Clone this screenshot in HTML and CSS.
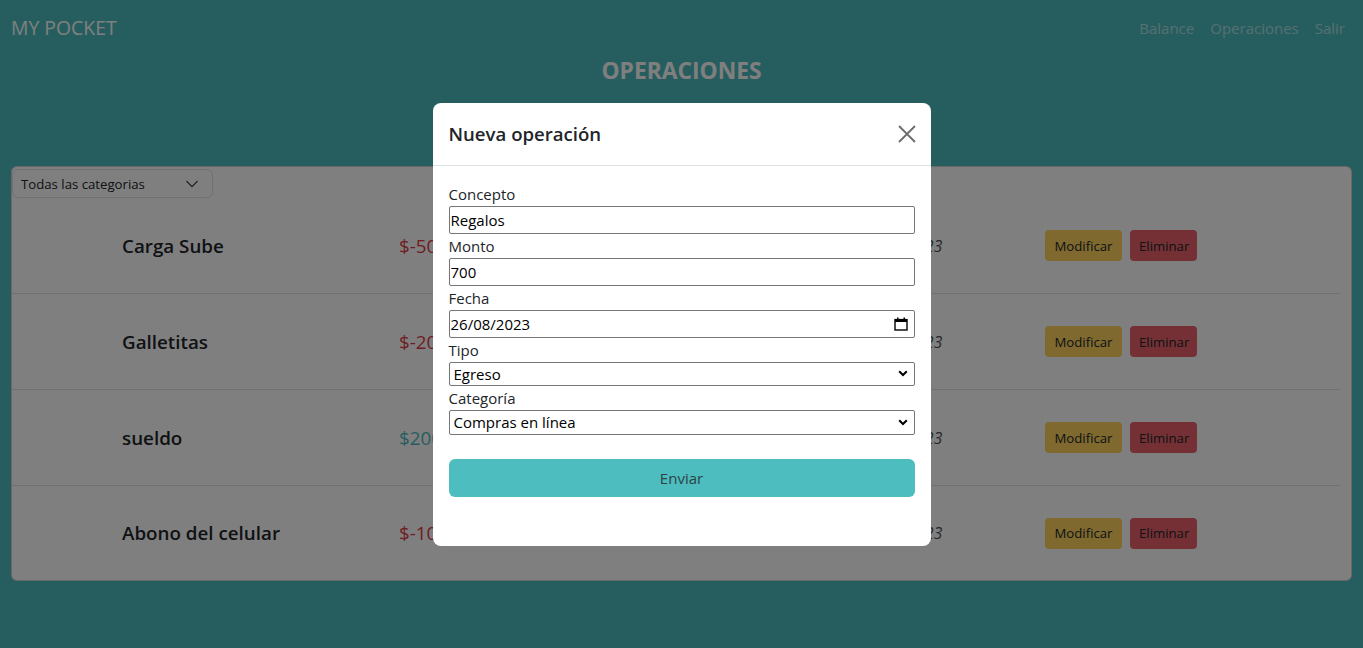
FILE: index.html
```html
<!DOCTYPE html>
<html lang="es">
<head>
<meta charset="utf-8">
<title>My Pocket - Operaciones</title>
<link rel="stylesheet" href="styles.css">
</head>
<body>
<nav class="navbar">
  <a class="brand" href="#">MY POCKET</a>
  <ul class="nav-links">
    <li><a href="#">Balance</a></li>
    <li><a href="#">Operaciones</a></li>
    <li><a href="#">Salir</a></li>
  </ul>
</nav>

<main>
  <h2 class="page-title">OPERACIONES</h2>
  <section class="card">
    <div class="filter">
      <select class="filter-select">
        <option>Todas las categorias</option>
      </select>
      <svg class="filter-chevron" width="14" height="14" viewBox="0 0 16 16"><path d="m2 5 6 6 6-6" fill="none" stroke="#343a40" stroke-width="1.5" stroke-linecap="round" stroke-linejoin="round"/></svg>
    </div>
    <ul class="op-list">
      <li class="op-row">
        <span class="op-desc">Carga Sube</span>
        <span class="op-amount neg">$-500</span>
        <span class="op-date">25/08/2023</span>
        <div class="op-actions"><button class="btn btn-edit">Modificar</button><button class="btn btn-del">Eliminar</button></div>
      </li>
      <li class="op-row">
        <span class="op-desc">Galletitas</span>
        <span class="op-amount neg">$-200</span>
        <span class="op-date">24/08/2023</span>
        <div class="op-actions"><button class="btn btn-edit">Modificar</button><button class="btn btn-del">Eliminar</button></div>
      </li>
      <li class="op-row">
        <span class="op-desc">sueldo</span>
        <span class="op-amount pos">$200000</span>
        <span class="op-date">01/08/2023</span>
        <div class="op-actions"><button class="btn btn-edit">Modificar</button><button class="btn btn-del">Eliminar</button></div>
      </li>
      <li class="op-row">
        <span class="op-desc">Abono del celular</span>
        <span class="op-amount neg">$-1000</span>
        <span class="op-date">10/08/2023</span>
        <div class="op-actions"><button class="btn btn-edit">Modificar</button><button class="btn btn-del">Eliminar</button></div>
      </li>
    </ul>
  </section>
</main>

<div class="backdrop"></div>
<div class="modal-wrap">
  <div class="modal">
    <div class="modal-header">
      <h5 class="modal-title">Nueva operación</h5>
      <button class="btn-close" aria-label="Cerrar">
        <svg width="18" height="18" viewBox="0 0 18 18"><path d="M1 1 17 17M17 1 1 17" stroke="#6b6b6b" stroke-width="1.8" fill="none"/></svg>
      </button>
    </div>
    <form class="modal-body">
      <label class="label">Concepto</label>
      <input class="input" type="text" value="Regalos">
      <label class="label">Monto</label>
      <input class="input" type="text" value="700">
      <label class="label">Fecha</label>
      <div class="control control-date">
        <input class="control-input" type="text" value="26/08/2023">
        <svg class="cal-icon" width="14" height="14" viewBox="0 0 14 14"><rect x="1" y="2.6" width="12" height="10.4" fill="none" stroke="#000" stroke-width="1.4"/><rect x="1" y="2" width="12" height="3" fill="#000"/><rect x="3" y="0.5" width="1.5" height="2.5" fill="#000"/><rect x="9.5" y="0.5" width="1.5" height="2.5" fill="#000"/></svg>
      </div>
      <label class="label">Tipo</label>
      <div class="control control-select">
        <select class="control-input"><option>Egreso</option><option>Ingreso</option></select>
        <svg class="sel-chevron" width="10" height="7" viewBox="0 0 10 7"><path d="M1.2 1.2 5 5 8.8 1.2" fill="none" stroke="#000" stroke-width="2"/></svg>
      </div>
      <label class="label">Categoría</label>
      <div class="control control-select control-select-last">
        <select class="control-input"><option>Compras en línea</option></select>
        <svg class="sel-chevron" width="10" height="7" viewBox="0 0 10 7"><path d="M1.2 1.2 5 5 8.8 1.2" fill="none" stroke="#000" stroke-width="2"/></svg>
      </div>
      <button class="btn-submit" type="button">Enviar</button>
    </form>
  </div>
</div>
</body>
</html>
```
FILE: styles.css
```css
* { box-sizing: border-box; }

html, body { height: 100%; }

body {
  margin: 0;
  background: #4cbdbf;
  font-family: "Open Sans", "Noto Sans", "DejaVu Sans", sans-serif;
  color: #212529;
  overflow: hidden;
}

/* navbar */
.navbar {
  display: flex;
  justify-content: space-between;
  align-items: center;
  height: 56px;
  padding: 8px 10px 8px 11px;
}
.brand {
  color: #fff;
  font-size: 19.4px;
  line-height: 40px;
  text-decoration: none;
}
.nav-links {
  display: flex;
  list-style: none;
  margin: 0;
  padding: 0;
}
.nav-links a {
  display: block;
  padding: 8px;
  font-size: 15px;
  line-height: 24px;
  color: rgba(255, 255, 255, 0.55);
  text-decoration: none;
}

/* page */
.page-title {
  margin: 2px 0 0;
  text-align: center;
  font-size: 22.8px;
  line-height: 26px;
  font-weight: 700;
  color: #fff;
}

.card {
  margin: 82px 11px 0;
  background: #fff;
  border: 1px solid rgba(0, 0, 0, 0.175);
  border-radius: 6px;
}

.filter {
  display: flex;
  align-items: center;
  width: 201px;
  height: 29px;
  margin-top: 2px;
  padding: 0 13px 0 8px;
  border: 1px solid #dee2e6;
  border-radius: 6px;
}
.filter-select {
  flex: 1;
  min-width: 0;
  appearance: none;
  -webkit-appearance: none;
  border: 0;
  background: transparent;
  padding: 0;
  font-family: inherit;
  font-size: 13.2px;
  color: #212529;
}
.filter-chevron { flex: none; }

.op-list {
  list-style: none;
  margin: 0 11px 0 0;
  padding: 0;
}
.op-row {
  display: grid;
  grid-template-columns: 277px 464px 182px auto;
  align-items: center;
  height: 96px;
  padding-left: 110px;
  border-bottom: 1px solid #dee2e6;
}
.op-row:last-child { border-bottom: none; height: 94px; }

.op-desc {
  font-size: 18.8px;
  font-weight: 600;
}
.op-amount { font-size: 18.8px; }
.neg { color: #dc3a48; }
.pos { color: #4cbdbf; }
.op-date {
  font-size: 15.5px;
  font-style: italic;
  color: #495057;
}
.op-actions {
  display: flex;
  gap: 8px;
}
.btn {
  height: 31px;
  padding: 0 8px;
  border: 1px solid transparent;
  border-radius: 4px;
  font-family: inherit;
  font-size: 13.2px;
  color: #212529;
}
.btn-edit { background: #ffd35e; width: 77px; }
.btn-del { background: #e8616b; width: 67px; }

/* modal */
.backdrop {
  position: fixed;
  inset: 0;
  background: rgba(0, 0, 0, 0.5);
}
.modal-wrap {
  position: fixed;
  inset: 0;
  display: flex;
  align-items: center;
  justify-content: center;
}
.modal {
  width: 498px;
  background: #fff;
  border-radius: 8px;
}
.modal-header {
  display: flex;
  justify-content: space-between;
  align-items: center;
  padding: 16px 15px 16px 16px;
  border-bottom: 1px solid #dee2e6;
}
.modal-title {
  margin: 0;
  font-size: 18.6px;
  line-height: 30px;
  font-weight: 600;
  color: #212529;
}
.btn-close {
  display: flex;
  padding: 0;
  border: 0;
  background: transparent;
}

.modal-body {
  display: flex;
  flex-direction: column;
  padding: 16px;
}
.label {
  font-size: 15px;
  line-height: 24px;
  color: #212529;
}
.input {
  width: 100%;
  height: 28px;
  padding: 0 1px;
  border: 1px solid #767676;
  border-radius: 2px;
  font-family: inherit;
  font-size: 15px;
  color: #000;
  background: #fff;
}
.control {
  display: flex;
  align-items: center;
  width: 100%;
  border: 1px solid #767676;
  border-radius: 2px;
  background: #fff;
}
.control-input {
  flex: 1;
  min-width: 0;
  height: 100%;
  border: 0;
  background: transparent;
  font-family: inherit;
  font-size: 15px;
  color: #000;
  appearance: none;
  -webkit-appearance: none;
  outline: none;
}
.control-date {
  height: 28px;
  padding: 0 6px 0 1px;
}
.control-date .control-input { padding: 0; }
.control-select {
  height: 24px;
  padding: 0 6px 0 4px;
}
.control-select-last { height: 25px; }
.control-select .control-input { padding: 0; }
.cal-icon { flex: none; }
.sel-chevron { flex: none; }

.btn-submit {
  height: 38px;
  margin: 24px 0 33px;
  border: 0;
  border-radius: 6px;
  background: #4dbdbf;
  font-family: inherit;
  font-size: 15px;
  color: #2c4344;
}
```
